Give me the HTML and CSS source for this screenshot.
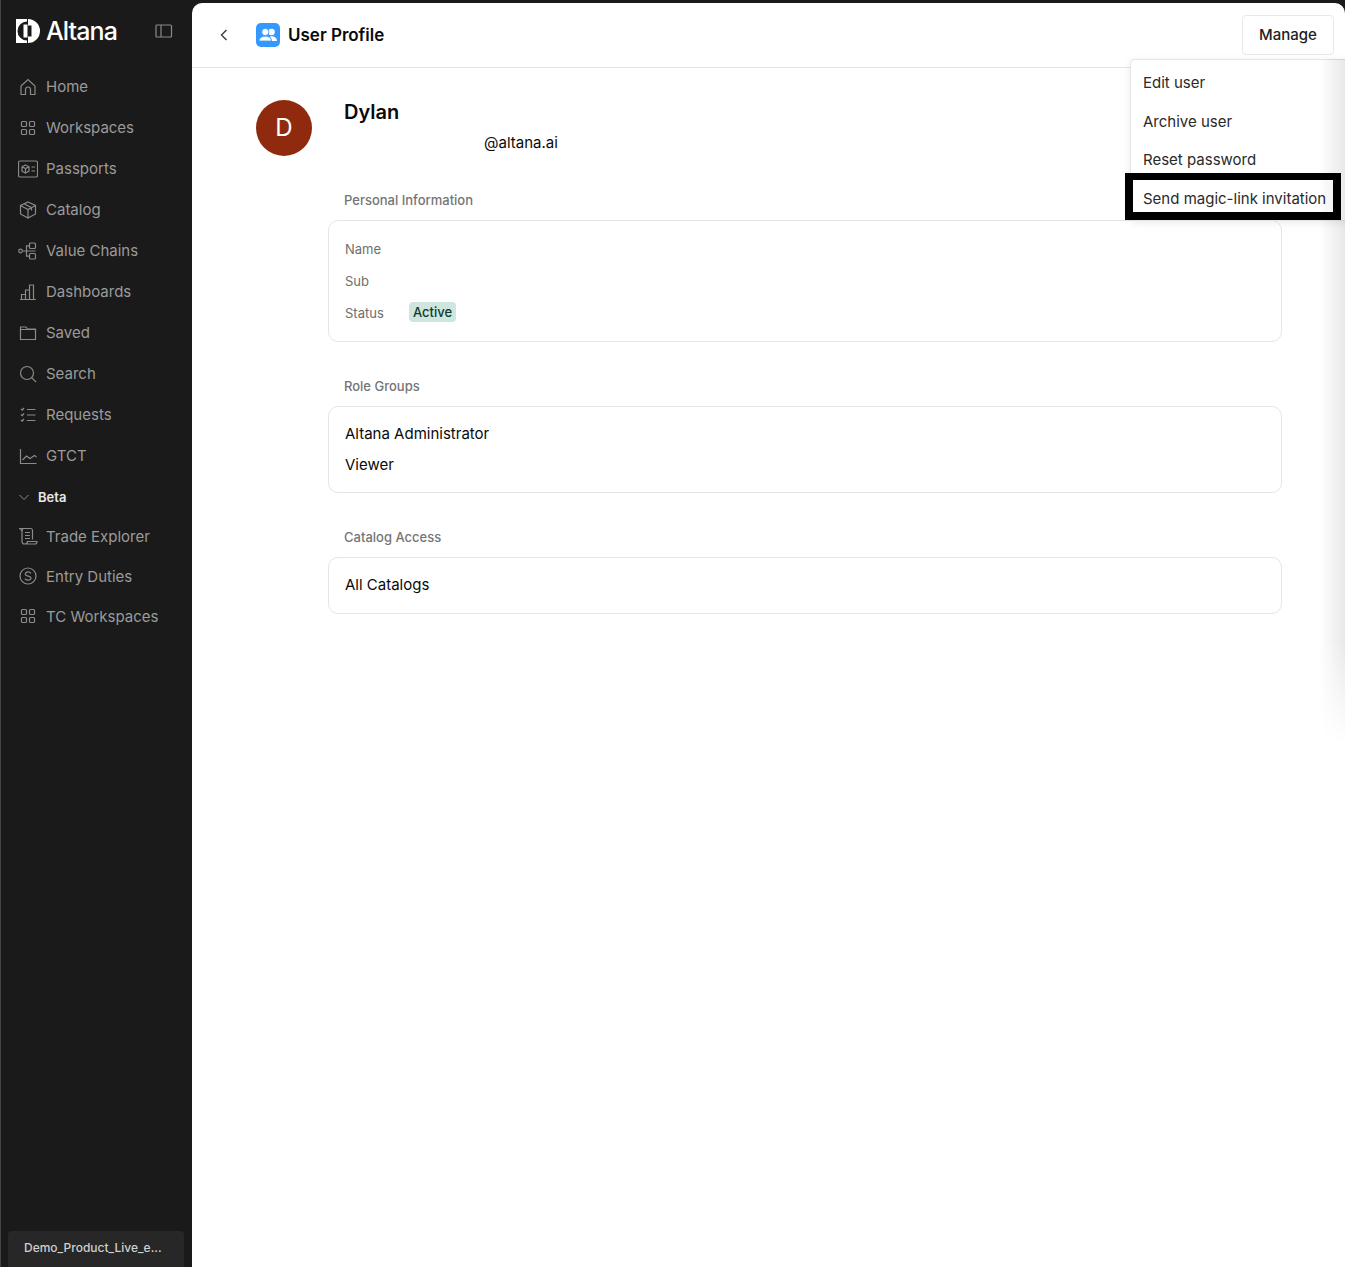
FILE: index.html
```html
<!DOCTYPE html>
<html>

<head>
    <title>User Profile</title>
    <link rel="stylesheet" href="styles.css">
</head>

<body>
    <div class="sidebar">
        <div class="brand">
            <svg class="brand-mark" width="24" height="24" viewBox="0 0 24 24" fill="#fff">
                <path d="M0 0h11v2.500a9.500 9.500 0 0 0 0 19V24H0z" />
                <path d="M12 0a12 12 0 0 1 0 24zM15.500 6.500h-3.500v11h3.500z" fill-rule="evenodd" />
                <rect x="7.500" y="5.500" width="4" height="13" />
            </svg>
            <span class="brand-name">Altana</span>
            <svg class="collapse-icon" width="18" height="16" viewBox="0 0 18 16" fill="none" stroke="#8a8a8a" stroke-width="1.200">
                <rect x="1" y="2" width="15.500" height="12" rx="1" />
                <path d="M6 2v12" />
            </svg>
        </div>

        <nav class="nav">
            <a class="nav-item">
                <svg class="nav-icon" viewBox="0 0 20 20">
                    <path d="M3 9l7-6.500L17 9v8.500h-4.500v-5a2.500 2.500 0 0 0-5 0v5H3z" />
                </svg>
                Home
            </a>
            <a class="nav-item">
                <svg class="nav-icon" viewBox="0 0 20 20">
                    <rect x="3.500" y="3.500" width="5" height="5" rx="1" />
                    <rect x="11.500" y="3.500" width="5" height="5" rx="1" />
                    <rect x="3.500" y="11.500" width="5" height="5" rx="1" />
                    <rect x="11.500" y="11.500" width="5" height="5" rx="1" />
                </svg>
                Workspaces
            </a>
            <a class="nav-item">
                <svg class="nav-icon" viewBox="0 0 20 20">
                    <rect x="0.500" y="2" width="19" height="16" rx="1.500" />
                    <path d="M7.500 6l3.500 1.800v4.400L7.500 14 4 12.200V7.800zM4 7.800l3.500 1.800L11 7.800M7.500 9.600V14M13.500 8h3.500M13.500 12h3.500" />
                </svg>
                Passports
            </a>
            <a class="nav-item">
                <svg class="nav-icon" viewBox="0 0 20 20">
                    <path d="M10 2l7.500 3.500v8.500L10 18l-7.500-4V5.500zM2.500 5.500L10 9.500l7.500-4M10 9.500V18M6 3.800l7.500 3.800v3" />
                </svg>
                Catalog
            </a>
            <a class="nav-item">
                <svg class="nav-icon" viewBox="0 0 20 20">
                    <circle cx="2.500" cy="10" r="1.800" />
                    <rect x="11.500" y="2" width="6" height="5.500" rx="1" />
                    <rect x="11.500" y="12.500" width="6" height="5.500" rx="1" />
                    <path d="M4.300 10H17.500M8.500 10V4.800h3M8.500 10v5.200h3" />
                </svg>
                Value Chains
            </a>
            <a class="nav-item">
                <svg class="nav-icon" viewBox="0 0 20 20">
                    <path d="M2 17.500h16M3.500 17.500v-5h4v5M7.500 17.500V8h4v9.500M11.500 17.500V3h4v14.500" />
                </svg>
                Dashboards
            </a>
            <a class="nav-item">
                <svg class="nav-icon" viewBox="0 0 20 20">
                    <path d="M2.500 16.500V4h5.500l1.500 2h8v10.500zM2.500 6.500h15" />
                </svg>
                Saved
            </a>
            <a class="nav-item">
                <svg class="nav-icon" viewBox="0 0 20 20">
                    <circle cx="9" cy="9" r="6.500" />
                    <path d="M13.700 13.700L18 18" />
                </svg>
                Search
            </a>
            <a class="nav-item">
                <svg class="nav-icon" viewBox="0 0 20 20">
                    <path d="M3 4l1.200 1.200L6 3M3 9.500l1.200 1.200L6 8.500M3 15l1.200 1.200L6 14M9 4.500h8.500M9 10h8.500M9 15.500h8.500" />
                </svg>
                Requests
            </a>
            <a class="nav-item">
                <svg class="nav-icon" viewBox="0 0 20 20">
                    <path d="M2.500 3v14.500h16M4.500 14l4-4 3.500 2.500 4.500-3 2 1.500" />
                </svg>
                GTCT
            </a>
            <div class="nav-group">
                <svg class="group-chevron" width="12" height="12" viewBox="0 0 12 12">
                    <path d="M1.500 4l4.500 4.500L10.500 4" />
                </svg>
                Beta
            </div>
            <a class="nav-item nav-item-beta">
                <svg class="nav-icon" viewBox="0 0 20 20">
                    <path d="M1 2.500h11.500a2 2 0 0 1 2 2v9M1 2.500c1.500 0 2.500 1 2.500 2.500M5 3c-.8.500-1 1.200-1 2.500v10a2.500 2.500 0 0 0 2.500 2.500h10.500c1 0 2-1 2-2.500H9.500c0 1.500-1 2.500-3 2.500M7 6.500h5M7 9.500h5M7 12.500h5" />
                </svg>
                Trade Explorer
            </a>
            <a class="nav-item nav-item-beta">
                <svg class="nav-icon" viewBox="0 0 20 20">
                    <circle cx="10" cy="10" r="8" />
                    <path d="M12.800 7.500c-.5-1.200-1.500-1.700-2.800-1.700-1.500 0-2.700.8-2.700 2.100 0 3 5.600 1.300 5.600 4.200 0 1.300-1.300 2.100-2.900 2.100-1.400 0-2.500-.6-3-1.800" />
                </svg>
                Entry Duties
            </a>
            <a class="nav-item nav-item-beta">
                <svg class="nav-icon" viewBox="0 0 20 20">
                    <rect x="3.500" y="3.500" width="5" height="5" rx="1" />
                    <rect x="11.500" y="3.500" width="5" height="5" rx="1" />
                    <rect x="3.500" y="11.500" width="5" height="5" rx="1" />
                    <rect x="11.500" y="11.500" width="5" height="5" rx="1" />
                </svg>
                TC Workspaces
            </a>
        </nav>

        <div class="org-switch">Demo_Product_Live_e...</div>
    </div>

    <div class="main">
        <div class="topbar">
            <svg class="back-icon" width="10" height="14" viewBox="0 0 10 14">
                <path d="M7.500 2L2.500 7l5 5" />
            </svg>
            <div class="page-icon">
                <svg width="18" height="14" viewBox="0 0 18 14" fill="#fff">
                    <circle cx="12.500" cy="4" r="3.300" />
                    <path d="M11 8.300c4-.5 7 1.300 7 4.700h-5z" />
                    <circle cx="6.300" cy="4" r="3.600" stroke="#3399ff" stroke-width="0.800" />
                    <path d="M0 13c0-3 2.500-4.800 6.300-4.800s6.200 1.800 6.200 4.800z" stroke="#3399ff" stroke-width="0.800" />
                </svg>
            </div>
            <h1 class="page-title">User Profile</h1>
            <button class="manage-btn">Manage</button>
        </div>

        <div class="profile">
            <div class="profile-head">
                <div class="avatar">D</div>
                <div class="profile-names">
                    <div class="profile-name">Dylan</div>
                    <div class="profile-email">@altana.ai</div>
                </div>
            </div>

            <div class="section-label">Personal Information</div>
            <div class="card card-info">
                <div class="info-row">
                    <div class="info-key">Name</div>
                </div>
                <div class="info-row">
                    <div class="info-key">Sub</div>
                </div>
                <div class="info-row">
                    <div class="info-key">Status</div>
                    <div class="status-badge">Active</div>
                </div>
            </div>

            <div class="section-label">Role Groups</div>
            <div class="card card-list card-roles">
                <div class="card-line">Altana Administrator</div>
                <div class="card-line">Viewer</div>
            </div>

            <div class="section-label">Catalog Access</div>
            <div class="card card-list">
                <div class="card-line">All Catalogs</div>
            </div>
        </div>

        <div class="manage-menu">
            <div class="menu-item">Edit user</div>
            <div class="menu-item">Archive user</div>
            <div class="menu-item">Reset password</div>
            <div class="menu-item">Send magic-link invitation</div>
        </div>
        <div class="menu-shadow"></div>
        <div class="callout"></div>
    </div>
</body>

</html>
```

FILE: styles.css
```css
body {
    margin: 0;
    padding: 0;
    height: 100vh;
    display: flex;
    overflow: hidden;
    font-family: Inter, "Liberation Sans", sans-serif;
    background-color: #1a1a1a;
    color: #0a0a0a;
}

.sidebar {
    width: 191px;
    flex-shrink: 0;
    display: flex;
    flex-direction: column;
    border-left: 1px solid #444;
}

.brand {
    height: 62px;
    display: flex;
    align-items: center;
    padding-left: 15px;
}

.brand-name {
    margin-left: 6px;
    font-size: 25px;
    font-weight: 500;
    letter-spacing: -0.900px;
    color: #fff;
}

.collapse-icon {
    margin-left: 38px;
}

.nav {
    display: flex;
    flex-direction: column;
    padding-left: 17px;
    padding-top: 4px;
}

.nav-item {
    height: 41px;
    display: flex;
    align-items: center;
    gap: 8px;
    font-size: 15px;
    color: #9b9b9b;
}

.nav-item-beta {
    height: 40px;
}

.nav-icon {
    width: 20px;
    height: 20px;
    fill: none;
    stroke: #8a8a8a;
    stroke-width: 1.200;
}

.nav-group {
    height: 39px;
    padding-top: 1px;
    display: flex;
    align-items: center;
    gap: 8px;
    font-size: 13px;
    font-weight: 600;
    color: #e8e8e8;
}

.group-chevron {
    fill: none;
    stroke: #8a8a8a;
    stroke-width: 1;
}

.org-switch {
    margin: auto 8px 0 7px;
    height: 36px;
    line-height: 34px;
    padding-left: 16px;
    border-radius: 4px 4px 0 0;
    background-color: #272727;
    color: #d0d0d0;
    font-size: 12px;
    font-weight: 500;
}

.main {
    position: relative;
    flex: 1;
    margin-top: 3px;
    overflow: hidden;
    border-radius: 10px 10px 0 0;
    background-color: #fff;
}

.topbar {
    height: 65px;
    box-sizing: border-box;
    display: flex;
    align-items: center;
    padding: 0 11px 1px 27px;
    border-bottom: 1px solid #e5e5e5;
}

.back-icon {
    fill: none;
    stroke: #444;
    stroke-width: 1.500;
}

.page-icon {
    width: 24px;
    height: 24px;
    margin-left: 27px;
    display: flex;
    align-items: center;
    justify-content: center;
    border-radius: 5px;
    background-color: #3399ff;
}

.page-title {
    margin: 0 0 0 8px;
    font-size: 17px;
    font-weight: 600;
}

.manage-btn {
    margin-left: auto;
    width: 92px;
    height: 40px;
    border: 1px solid #e8e8e8;
    border-radius: 4px;
    background-color: #fff;
    font-family: inherit;
    font-size: 15px;
    font-weight: 500;
    color: #222;
}

.profile {
    padding: 32px 63px 0 136px;
}

.profile-head {
    display: flex;
    margin-left: -72px;
    height: 56px;
}

.avatar {
    width: 56px;
    height: 56px;
    border-radius: 50%;
    background-color: #8f2a0e;
    color: #fff;
    font-size: 24px;
    font-weight: 400;
    line-height: 56px;
    text-align: center;
}

.profile-names {
    margin-left: 32px;
}

.profile-name {
    font-size: 20px;
    font-weight: 600;
    line-height: 24px;
}

.profile-email {
    margin-top: 7px;
    margin-left: 140px;
    font-size: 15px;
    line-height: 24px;
}

.section-label {
    margin: 35px 0 11px 16px;
    font-size: 13px;
    font-weight: 500;
    line-height: 18px;
    color: #757575;
}

.card {
    box-sizing: border-box;
    padding: 0 16px;
    border: 1px solid #e5e5e5;
    border-radius: 10px;
}

.card-info {
    height: 122px;
    padding-top: 12px;
}

.card-list {
    padding-top: 15px;
    padding-bottom: 17px;
}

.card-roles {
    padding-bottom: 16px;
}

.info-row {
    height: 32px;
    display: flex;
    align-items: center;
    font-size: 13px;
    color: #6e6e6e;
}

.info-key {
    width: 64px;
}

.status-badge {
    margin-top: -2px;
    padding: 0 4px;
    line-height: 20px;
    border-radius: 4px;
    background-color: #cfe5e0;
    color: #0d3b30;
    font-weight: 500;
}

.card-line {
    height: 23px;
    font-size: 15px;
    line-height: 23px;
}

.card-line + .card-line {
    margin-top: 8px;
}

.menu-shadow {
    position: absolute;
    top: 56px;
    right: 0;
    width: 26px;
    height: 684px;
    background: linear-gradient(to right, rgba(0, 0, 0, 0), rgba(0, 0, 0, 0.09));
    -webkit-mask-image: linear-gradient(to bottom, #000 85%, transparent);
}

.manage-menu {
    position: absolute;
    top: 56px;
    left: 938px;
    width: 240px;
    height: 162px;
    box-sizing: border-box;
    padding-top: 4px;
    border: 1px solid #e5e5e5;
    border-radius: 4px;
    background-color: #fff;
    box-shadow: 0 2px 8px rgba(0, 0, 0, 0.08);
}

.menu-item {
    height: 38.600px;
    padding-left: 12px;
    font-size: 15px;
    line-height: 38.600px;
    color: #2a2a2a;
}

.callout {
    position: absolute;
    top: 170px;
    left: 933px;
    width: 200px;
    height: 32px;
    border: 8px solid #000;
    border-width: 7px 8px 8px;
}
```
